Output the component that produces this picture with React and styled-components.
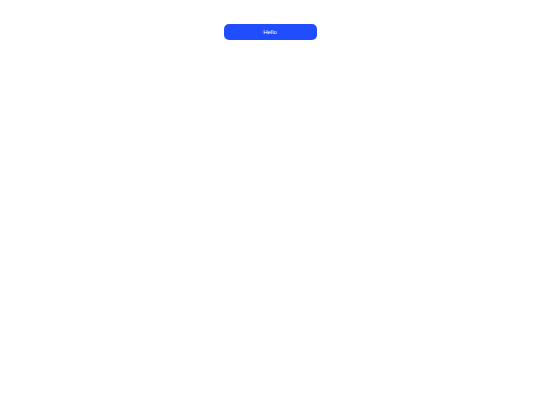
import React from 'react'
import styled, { createGlobalStyle } from 'styled-components'

const GlobalStyle = createGlobalStyle`
  body {
    margin: 0;
    background: #ffffff;
    font-family: "Liberation Sans", Arial, sans-serif;
  }
`;

const Page = styled.div`
  display: flex;
  justify-content: center;
  padding-top: 24px;
`;

const Button = styled.button`
  width: 93px;
  height: 16px;
  border: none;
  border-radius: 5px;
  background-color: #1f4dff;
  color: #ffffff;
  font-family: "Liberation Sans", Arial, sans-serif;
  font-size: 6px;
  padding: 0;
  cursor: pointer;
`;

export default function App() {
  return (
    <>
      <GlobalStyle />
      <Page>
        <Button>Hello</Button>
      </Page>
    </>
  )
}
